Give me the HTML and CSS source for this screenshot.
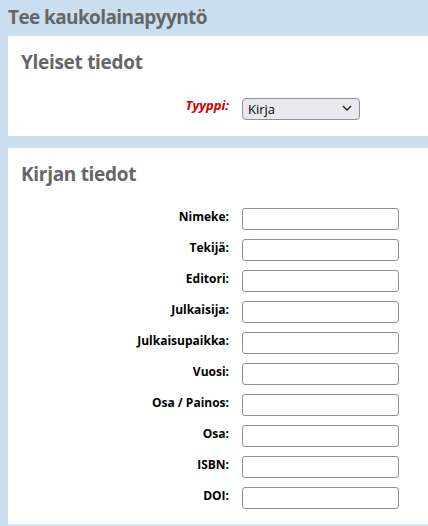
FILE: index.html
```html
<!DOCTYPE html>
<html lang="fi">
<head>
<meta charset="utf-8">
<title>Tee kaukolainapyyntö</title>
<link rel="stylesheet" href="styles.css">
</head>
<body>
<div class="page">
  <h1 class="title">Tee kaukolainapyyntö</h1>
  <section class="panel panel-general">
    <h2 class="panel-title">Yleiset tiedot</h2>
    <div class="form-grid">
      <label class="label label-required" for="type">Tyyppi:</label>
      <div class="select-wrap">
        <select id="type" class="select"><option>Kirja</option></select>
        <svg class="chev" width="10" height="6" viewBox="0 0 10 6"><path d="M1 1l4 4 4-4" fill="none" stroke="#222" stroke-width="1.4"/></svg>
      </div>
    </div>
  </section>
  <section class="panel panel-book">
    <h2 class="panel-title">Kirjan tiedot</h2>
    <div class="form-grid">
      <label class="label">Nimeke:</label><input class="input" type="text">
      <label class="label">Tekijä:</label><input class="input" type="text">
      <label class="label">Editori:</label><input class="input" type="text">
      <label class="label">Julkaisija:</label><input class="input" type="text">
      <label class="label">Julkaisupaikka:</label><input class="input" type="text">
      <label class="label">Vuosi:</label><input class="input" type="text">
      <label class="label">Osa / Painos:</label><input class="input" type="text">
      <label class="label">Osa:</label><input class="input" type="text">
      <label class="label">ISBN:</label><input class="input" type="text">
      <label class="label">DOI:</label><input class="input" type="text">
    </div>
  </section>
</div>
</body>
</html>
```

FILE: styles.css
```css
html, body {
  margin: 0;
  padding: 0;
  background: #c9dff0;
  font-family: "Open Sans", "Noto Sans", sans-serif;
}
.page {
  padding: 0 0 0 8px;
  height: 526px;
  overflow: hidden;
}
.title {
  margin: 0;
  height: 36px;
  font-size: 19px;
  line-height: 34px;
  font-weight: 700;
  color: #666;
  letter-spacing: -0.6px;
}
.panel {
  background: #fff;
  padding: 0 0 0 13px;
}
.panel-general {
  height: 100px;
  margin-bottom: 12px;
}
.panel-book {
  height: 376px;
  border-bottom: 2px solid #dce9f4;
}
.panel-title {
  margin: 0;
  padding-top: 13px;
  height: 40px;
  font-size: 19px;
  line-height: 26px;
  font-weight: 700;
  color: #666;
  letter-spacing: -0.3px;
}
.panel-general .panel-title { height: 48px; }
.panel-book .panel-title { height: 47px; }
.form-grid {
  display: grid;
  grid-template-columns: 208px 157px;
  column-gap: 13px;
  row-gap: 9px;
  grid-auto-rows: 22px;
}
.label {
  text-align: right;
  font-size: 12px;
  font-weight: 700;
  color: #000;
  line-height: 18px;
  letter-spacing: 0;
}
.label-required {
  color: #cc0000;
  font-style: italic;
  font-size: 13px;
  line-height: 16px;
}
.input {
  box-sizing: border-box;
  width: 157px;
  height: 22px;
  margin: 0;
  border: 1px solid #8f8f9d;
  border-radius: 3px;
  background: #fff;
}
.select-wrap {
  position: relative;
  width: 118px;
  height: 22px;
}
.select {
  appearance: none;
  -webkit-appearance: none;
  box-sizing: border-box;
  width: 118px;
  height: 22px;
  margin: 0;
  padding: 0 0 0 5px;
  border: 1px solid #8f8f9d;
  border-radius: 4px;
  background: #e9e9ed;
  font-family: "Open Sans", sans-serif;
  font-size: 13px;
  color: #000;
}
.chev {
  position: absolute;
  right: 8px;
  top: 8px;
  pointer-events: none;
}
```
